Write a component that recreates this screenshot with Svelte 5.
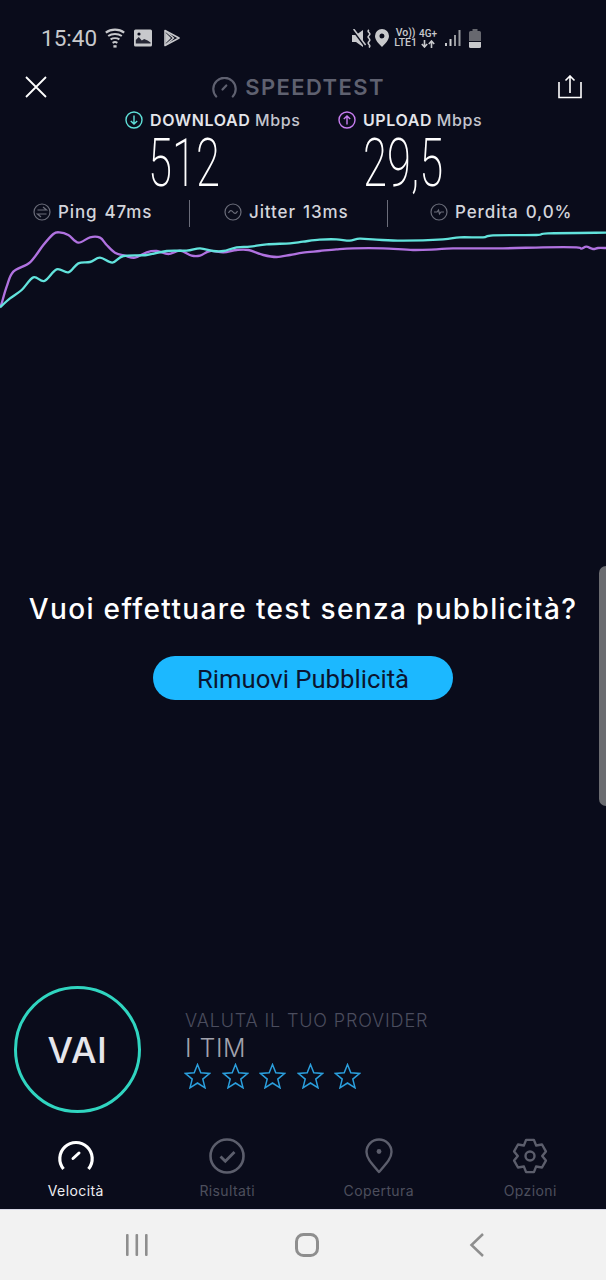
<script>
	const purple = [
		[0, 262], [5, 250], [20, 200], [40, 155], [90, 127], [130, 75], [160, 42], [178, 37], [205, 45], [235, 68],
		[270, 52], [300, 53], [320, 75], [345, 98], [375, 107], [405, 113], [440, 97], [470, 93], [505, 102], [540, 92],
		[575, 107], [600, 107], [630, 93], [670, 97], [710, 90], [745, 90], [790, 105], [830, 111], [870, 105], [909, 98],
		[959, 93], [1009, 88], [1059, 85], [1149, 85], [1239, 90], [1309, 88], [1359, 85], [1509, 85], [1629, 82],
		[1729, 82], [1744, 86], [1759, 80], [1779, 87], [1794, 84], [1818, 84]
	];
	const cyan = [
		[0, 262], [30, 235], [65, 210], [100, 172], [133, 183], [170, 148], [205, 157], [235, 130], [270, 126], [300, 113],
		[337, 128], [370, 108], [440, 105], [500, 93], [560, 92], [600, 85], [640, 93], [670, 93], [710, 82], [750, 80],
		[800, 73], [870, 70], [909, 65], [959, 59], [1009, 58], [1049, 62], [1079, 56], [1129, 59], [1209, 62], [1329, 58],
		[1379, 52], [1449, 52], [1479, 46], [1609, 45], [1644, 40], [1818, 38]
	];

	// catmull-rom through the sampled points
	function smooth(pts) {
		let d = `M${pts[0][0]} ${pts[0][1]}`;
		for (let i = 0; i < pts.length - 1; i++) {
			const p0 = pts[i - 1] || pts[i];
			const p1 = pts[i];
			const p2 = pts[i + 1];
			const p3 = pts[i + 2] || p2;
			const c1x = p1[0] + (p2[0] - p0[0]) / 6;
			const c1y = p1[1] + (p2[1] - p0[1]) / 6;
			const c2x = p2[0] - (p3[0] - p1[0]) / 6;
			const c2y = p2[1] - (p3[1] - p1[1]) / 6;
			d += `C${c1x.toFixed(1)} ${c1y.toFixed(1)} ${c2x.toFixed(1)} ${c2y.toFixed(1)} ${p2[0]} ${p2[1]}`;
		}
		return d;
	}

	function gear(cx, cy) {
		let pts = [];
		for (let i = 0; i < 6; i++) {
			const a = (i * Math.PI) / 3 - Math.PI / 2;
			const at = (r, off) => [cx + r * Math.cos(a + off), cy + r * Math.sin(a + off)];
			pts.push(at(12.2, -0.52), at(16.6, -0.24), at(16.6, 0.24), at(12.2, 0.52));
		}
		return 'M' + pts.map((p) => p[0].toFixed(1) + ' ' + p[1].toFixed(1)).join('L') + 'Z';
	}

	const stars = [0, 1, 2, 3, 4];
	const tabs = ['Velocità', 'Risultati', 'Copertura', 'Opzioni'];
</script>

<div class="screen">
	<div class="status">
		<div class="status-left">
			<span class="time">15:40</span>
			<svg class="wifi" width="20" height="20" viewBox="0 0 20 20" fill="none" stroke="#c8c9cc">
				<path d="M.8 4.6C6 .6 14 .6 19.2 4.6" stroke-width="2.2" />
				<path d="M3.2 8C7 5.2 13 5.2 16.8 8" stroke-width="2" />
				<path d="M5.6 11.4C8 9.8 12 9.8 14.4 11.4" stroke-width="2" />
				<path d="M7.6 14.8C9 14 11 14 12.4 14.8" stroke-width="2" />
				<path d="M8.4 18.4h3.2" stroke-width="2.4" />
			</svg>
			<svg class="gallery" width="18" height="18" viewBox="0 0 18 18">
				<rect width="18" height="17" y=".5" rx="1.5" fill="#c8c9cc" />
				<path d="M1.8 14.5V11l3-3 3 3.5 2.4-1.6 3.4 1.6 3 2v1z" fill="#0a0c1b" opacity=".85" />
				<circle cx="5" cy="5" r="1.6" fill="#0a0c1b" />
			</svg>
			<svg class="play" width="16" height="18" viewBox="0 0 16 18" fill="none" stroke="#c8c9cc">
				<path d="M1 1.5 15 9 1 16.5z" stroke-width="1.6" stroke-linejoin="round" />
				<path d="M1.5 2 9.5 9 1.5 16" stroke-width="1.4" />
				<path d="M1.5 3.5V14.5L7 9z" fill="#c8c9cc" stroke="none" />
			</svg>
		</div>
		<div class="status-right">
			<svg width="20" height="19" viewBox="0 0 20 19" class="mute">
				<path d="M0 6h4l7-5v17l-7-5H0z" fill="#c8c9cc" />
				<path d="M1 1l12 16" stroke="#0a0c1b" stroke-width="2.2" />
				<path d="M1.6 0l12 16" stroke="#c8c9cc" stroke-width="1.5" />
				<path d="M17 1c-3 2 3 3 0 5.500s3 3 0 6 3 3 0 6" stroke="#c8c9cc" stroke-width="1.6" fill="none" />
			</svg>
			<svg width="14" height="18" viewBox="0 0 14 18" class="pin">
				<path fill-rule="evenodd" d="M7 0a7 7 0 0 1 7 7c0 4-4 8-7 11-3-3-7-7-7-11a7 7 0 0 1 7-7zm0 4.500a2.500 2.500 0 1 0 0 5 2.500 2.500 0 0 0 0-5z" fill="#c8c9cc" />
			</svg>
			<div class="net">
				<span class="vo">Vo))</span>
				<span>LTE1</span>
			</div>
			<div class="net four-g">
				<span>4G+</span>
				<svg width="14" height="8" viewBox="0 0 14 8" fill="none" stroke="#c8c9cc" stroke-width="1.6">
					<path d="M3.500 0v7M.8 4l2.700 3 2.700-3" />
					<path d="M10.500 8V1M7.800 4l2.700-3 2.700 3" />
				</svg>
			</div>
			<svg class="signal" width="16" height="16" viewBox="0 0 16 16" fill="#c8c9cc">
				<rect x="0" y="13" width="2" height="3" />
				<rect x="4.500" y="9" width="2" height="7" />
				<rect x="9" y="5" width="2" height="11" opacity=".75" />
				<rect x="13.500" y="0" width="2" height="16" opacity=".75" />
			</svg>
			<svg class="battery" width="12" height="19" viewBox="0 0 12 19">
				<path d="M3.500 0h5v2h2a1.500 1.500 0 0 1 1.500 1.500V12H0V3.500A1.500 1.500 0 0 1 1.500 2h2z" fill="#67686f" />
				<path d="M0 13h12v4.500a1.500 1.500 0 0 1-1.500 1.500h-9A1.500 1.500 0 0 1 0 17.500z" fill="#c8c9cc" />
			</svg>
		</div>
	</div>

	<div class="top">
		<svg class="close" width="22" height="22" viewBox="0 0 22 22" stroke="#fff" stroke-width="1.800" fill="none">
			<path d="M1 1l20 20M21 1 1 21" />
		</svg>
		<div class="brand">
			<svg width="25" height="21" viewBox="0 0 25 21" fill="none" stroke="#5f6170" stroke-width="2.200" stroke-linecap="round">
				<path d="M4.200 19.500A11.200 11.200 0 1 1 20.800 19.500" />
				<path d="M10.500 12.500l3.800-4" />
			</svg>
			<span>SPEEDTEST</span>
		</div>
		<svg class="share" width="24" height="24" viewBox="0 0 24 24" fill="none" stroke="#fff" stroke-width="1.600">
			<path d="M1 7v15.500h22V7" />
			<path d="M12 18V1M7.500 5.500 12 1l4.500 4.500" />
		</svg>
	</div>

	<div class="speeds">
		<div class="speed speed-down">
			<div class="speed-label">
				<svg width="18" height="18" viewBox="0 0 18 18" fill="none" stroke="#5fe0d8" stroke-width="1.400">
					<circle cx="9" cy="9" r="8" />
					<path d="M9 4.500v8.500M5.800 10 9 13l3.200-3" />
				</svg>
				<span>DOWNLOAD <b>Mbps</b></span>
			</div>
			<div class="speed-value"><span>512</span></div>
		</div>
		<div class="speed speed-up">
			<div class="speed-label">
				<svg width="18" height="18" viewBox="0 0 18 18" fill="none" stroke="#c77df0" stroke-width="1.400">
					<circle cx="9" cy="9" r="8" />
					<path d="M9 13.500V5M5.800 8 9 5l3.200 3" />
				</svg>
				<span>UPLOAD <b>Mbps</b></span>
			</div>
			<div class="speed-value"><span>29,5</span></div>
		</div>
	</div>

	<div class="stats">
		<div class="stat stat-ping">
			<svg width="18" height="18" viewBox="0 0 18 18" fill="none" stroke="#6b6d7a" stroke-width="1.200">
				<circle cx="9" cy="9" r="8" />
				<path d="M4.500 7h9L10 4M13.500 11h-9L8 14" />
			</svg>
			<span class="stat-name">Ping</span>
			<span>47ms</span>
		</div>
		<div class="stat stat-jitter">
			<svg width="18" height="18" viewBox="0 0 18 18" fill="none" stroke="#6b6d7a" stroke-width="1.200">
				<circle cx="9" cy="9" r="8" />
				<path d="M4.500 10c1.500-3 3-3 4.500-1s3 2 4.500-1" />
			</svg>
			<span class="stat-name">Jitter</span>
			<span>13ms</span>
		</div>
		<div class="stat stat-loss">
			<svg width="18" height="18" viewBox="0 0 18 18" fill="none" stroke="#6b6d7a" stroke-width="1.200">
				<circle cx="9" cy="9" r="8" />
				<path d="M4 9h3l1.500-2 1 4L11 9h3" />
			</svg>
			<span class="stat-name">Perdita</span>
			<span>0,0%</span>
		</div>
	</div>

	<svg class="chart" width="606" height="100" viewBox="0 21 1818 300" fill="none" stroke-width="7" stroke-linejoin="round">
		<path d={smooth(purple)} stroke="#b072e0" />
		<path d={smooth(cyan)} stroke="#62e3dc" />
	</svg>

	<div class="promo">
		<h2>Vuoi effettuare test senza pubblicità?</h2>
		<button class="remove">Rimuovi Pubblicità</button>
	</div>

	<div class="scrollbar"></div>

	<div class="rate">
		<button class="go">VAI</button>
		<div class="provider">
			<div class="provider-title">VALUTA IL TUO PROVIDER</div>
			<div class="provider-name">I TIM</div>
			<div class="stars">
				{#each stars as s}
					<svg width="27" height="26" viewBox="0 0 27 26" fill="none" stroke="#2b9fdd" stroke-width="1.500" stroke-linejoin="miter">
						<path d="M13.500 1.500l3.300 8.300 8.900.6-6.900 5.700 2.200 8.700-7.500-4.800-7.500 4.800 2.200-8.700-6.900-5.700 8.900-.6z" />
					</svg>
				{/each}
			</div>
		</div>
	</div>

	<div class="tabs">
		{#each tabs as tab, i}
			<div class="tab" class:active={i === 0}>
				<svg width="38" height="38" viewBox="0 0 38 38" fill="none" stroke={i === 0 ? '#fff' : '#5c5e6c'}>
					{#if i === 0}
						<path d="M6.500 32A16.200 16.200 0 1 1 31.500 32" stroke-width="3.200" stroke-linecap="butt" />
						<path d="M16 21.500l6-5.500" stroke-width="3" stroke-linecap="round" />
					{:else if i === 1}
						<circle cx="19" cy="19" r="16.500" stroke-width="2.600" />
						<path d="M12.500 19.500l4.800 4.800 9.200-9.200" stroke-width="2.800" />
					{:else if i === 2}
						<path d="M19 35C13 28 6.500 22 6.500 15a12.500 12.500 0 0 1 25 0c0 7-6.500 13-12.500 20z" stroke-width="2.400" stroke-linejoin="round" />
						<circle cx="19" cy="14.500" r="2.400" fill="#5c5e6c" stroke="none" />
					{:else}
						<path d={gear(19, 19)} stroke-width="2.400" stroke-linejoin="round" />
						<circle cx="19" cy="19" r="4.500" stroke-width="2.400" />
					{/if}
				</svg>
				<span>{tab}</span>
			</div>
		{/each}
	</div>

	<div class="nav">
		<svg width="22" height="22" viewBox="0 0 22 22" fill="#8e8e8e">
			<rect x="0" width="2.600" height="22" rx="1" />
			<rect x="9.500" width="2.600" height="22" rx="1" />
			<rect x="19" width="2.600" height="22" rx="1" />
		</svg>
		<svg width="24" height="24" viewBox="0 0 24 24" fill="none" stroke="#8e8e8e" stroke-width="3">
			<rect x="1.500" y="1.500" width="21" height="21" rx="7" />
		</svg>
		<svg width="22" height="24" viewBox="0 0 22 24" fill="none" stroke="#8e8e8e" stroke-width="2.500">
			<path d="M17 1 5.500 12 17 23" />
		</svg>
	</div>
</div>

<style>
	:global(body) {
		background: #0a0c1b;
	}

	.screen {
		position: relative;
		width: 606px;
		height: 1280px;
		display: flex;
		flex-direction: column;
		overflow: hidden;
		background: #0a0c1b;
		font-family: Inter, 'Noto Sans', sans-serif;
		color: #fff;
	}

	svg {
		display: block;
		flex: none;
	}

	/* status bar */
	.status {
		height: 60px;
		padding: 8px 125px 0 41px;
		display: flex;
		align-items: center;
		justify-content: space-between;
		color: #c8c9cc;
		font-family: Roboto, sans-serif;
	}

	.status-left,
	.status-right {
		display: flex;
		align-items: center;
	}

	.time {
		font-size: 22.500px;
		width: 64px;
	}

	.gallery {
		margin-left: 9px;
	}

	.play {
		margin-left: 12px;
	}

	.pin {
		margin-left: 3px;
	}

	.net {
		margin-left: 5px;
		display: flex;
		flex-direction: column;
		align-items: center;
		font-size: 10.500px;
		line-height: 10px;
		font-weight: 500;
	}

	.four-g {
		margin-left: 2px;
		font-size: 10px;
	}

	.four-g svg {
		margin-top: 1px;
	}

	.signal {
		margin-left: 8px;
	}

	.battery {
		margin-left: 8px;
	}

	/* title row */
	.top {
		height: 38px;
		padding: 0 24px 0 25px;
		display: flex;
		align-items: center;
		justify-content: space-between;
	}

	.brand {
		display: flex;
		align-items: center;
		gap: 8px;
		color: #5f6170;
		font-size: 22px;
		font-weight: 600;
		letter-spacing: 1.400px;
		margin-right: 8px;
	}

	/* speed readouts */
	.speeds {
		display: flex;
		height: 88px;
	}

	.speed {
		display: flex;
		flex-direction: column;
		align-items: flex-start;
	}

	.speed-down {
		width: 303px;
		padding-left: 125px;
		box-sizing: border-box;
	}

	.speed-up {
		padding-left: 35px;
	}

	.speed-label {
		height: 28px;
		display: flex;
		align-items: center;
		gap: 7px;
		font-size: 16px;
		letter-spacing: 0.600px;
		font-weight: 600;
		color: #e4e5ea;
		white-space: nowrap;
	}

	.speed-label b {
		font-weight: 500;
		color: #c4c5ce;
	}

	.speed-value {
		height: 60px;
		line-height: 60px;
		font-family: Roboto, sans-serif;
		font-size: 66px;
		font-weight: 200;
		white-space: nowrap;
	}

	.speed-value span {
		display: inline-block;
		transform: scaleX(0.66);
		transform-origin: left center;
	}

	.speed-down .speed-value {
		margin-left: 23px;
	}

	.speed-up .speed-value {
		margin-left: 25px;
	}

	/* ping / jitter / loss */
	.stats {
		height: 27px;
		margin-top: 6px;
		display: grid;
		grid-template-columns: 190px 198px 1fr;
		font-size: 17px;
		letter-spacing: 0.900px;
		font-weight: 500;
		color: #d4d5db;
	}

	.stat {
		display: flex;
		align-items: center;
		white-space: nowrap;
		box-sizing: border-box;
		padding-bottom: 4px;
	}

	.stat svg {
		margin-right: 7px;
	}

	.stat-name {
		margin-right: 7px;
	}

	.stat-ping {
		padding-left: 33px;
		border-right: 1px solid #6b6d7a;
	}

	.stat-jitter {
		padding-left: 34px;
		border-right: 1px solid #6b6d7a;
	}

	.stat-loss {
		padding-left: 42px;
	}

	/* promo */
	.promo {
		margin-top: 261px;
		display: flex;
		flex-direction: column;
		align-items: center;
	}

	.promo h2 {
		margin: 0;
		font-size: 28px;
		letter-spacing: 1.350px;
		line-height: 42px;
		font-weight: 500;
		white-space: nowrap;
	}

	.remove {
		margin-top: 26px;
		width: 300px;
		height: 44px;
		border: 0;
		padding: 2px 0 0;
		border-radius: 22px;
		background: #1cb8ff;
		color: #0b1530;
		font-family: Roboto, sans-serif;
		font-size: 25.700px;
	}

	.scrollbar {
		position: absolute;
		right: 0;
		top: 566px;
		width: 7px;
		height: 240px;
		background: #6b6c70;
		border-radius: 7px 0 0 7px;
	}

	/* rate row */
	.rate {
		margin-top: auto;
		margin-bottom: 17px;
		padding-left: 14px;
		display: flex;
		align-items: center;
		gap: 44px;
	}

	.go {
		width: 127px;
		height: 127px;
		box-sizing: border-box;
		border: 3px solid #30d5c0;
		border-radius: 50%;
		background: none;
		color: #e6e6ec;
		font-family: Inter, sans-serif;
		font-size: 36px;
		letter-spacing: 0.500px;
		font-weight: 500;
		padding: 0;
	}

	.provider-title {
		font-size: 18px;
		letter-spacing: 0.850px;
		line-height: 22px;
		font-weight: 300;
		color: #4b4d5e;
		white-space: nowrap;
	}

	.provider-name {
		font-size: 25px;
		letter-spacing: 0.500px;
		line-height: 32px;
		font-weight: 300;
		color: #a1a2ad;
	}

	.stars {
		display: flex;
		gap: 10.500px;
		margin: -1px 0 1px -1px;
	}

	/* tabs */
	.tabs {
		height: 79px;
		box-sizing: border-box;
		padding-top: 7px;
		display: grid;
		grid-template-columns: repeat(4, 1fr);
	}

	.tab {
		display: flex;
		flex-direction: column;
		align-items: center;
		gap: 7px;
		font-size: 14px;
		color: #4d4f5d;
		letter-spacing: 0.400px;
	}

	.tab.active {
		color: #eeeef2;
	}

	/* android nav */
	.nav {
		height: 71px;
		box-sizing: border-box;
		border-top: 1px solid #d8d9e6;
		padding-left: 8px;
		background: #f2f2f2;
		display: flex;
		align-items: center;
		justify-content: center;
		gap: 147px;
	}
</style>
